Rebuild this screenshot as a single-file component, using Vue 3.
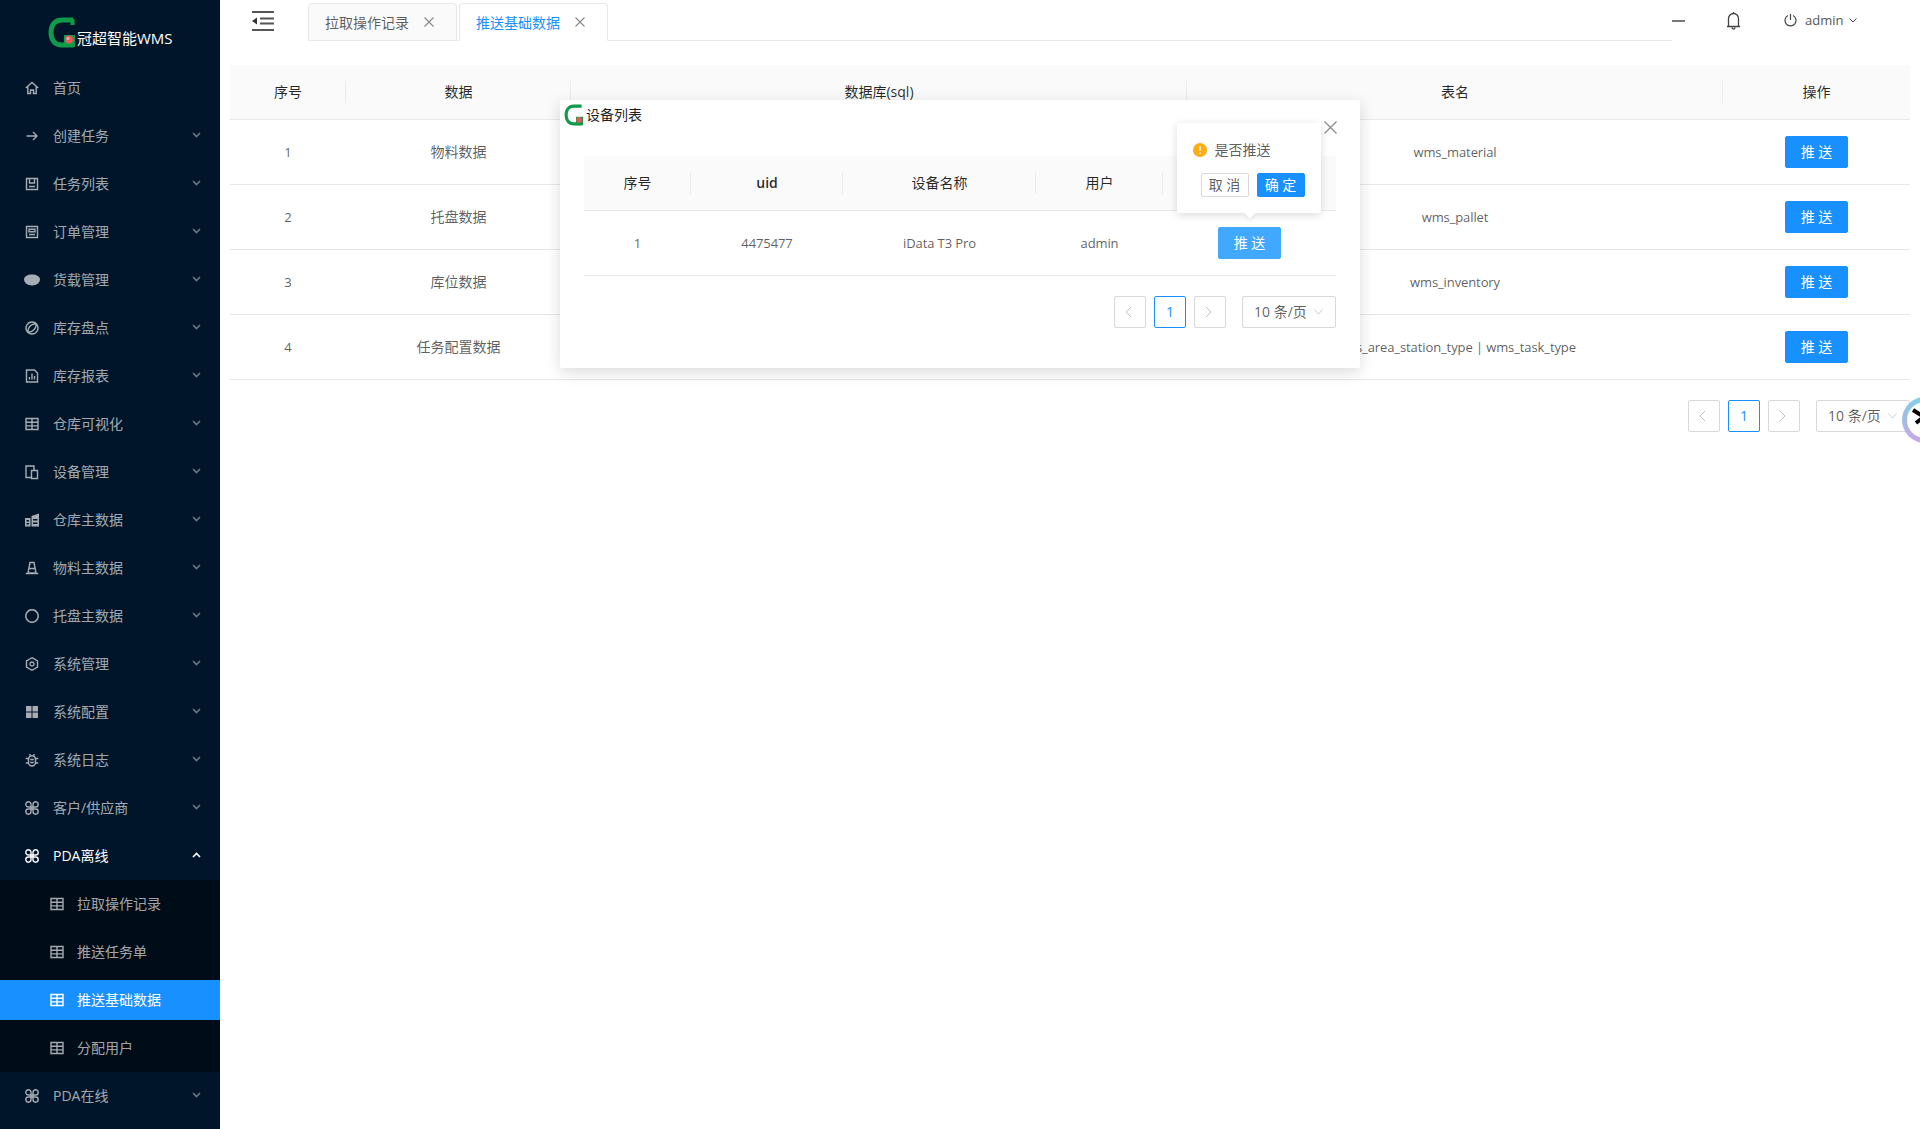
<template>
  <div class="app">
    <aside class="sider">
      <div class="logo">
        <svg class="logo-mark" viewBox="0 0 27 31">
          <path d="M25 3H14C7 3 3 8 3 15.500S7 28 14 28H25" fill="none" stroke="#0f9b4a" stroke-width="5" />
          <path d="M24.500 2V8" stroke="#0f9b4a" stroke-width="4" />
          <rect x="16" y="18" width="11" height="12" fill="#0f9b4a" />
          <circle cx="21" cy="22.500" r="4" fill="#e8575c" />
          <circle cx="20" cy="21.500" r="1.500" fill="#f6b4b4" />
        </svg>
        <span class="logo-text">冠超智能WMS</span>
      </div>
      <ul class="menu">
        <template v-for="item in menu" :key="item.label">
          <li class="menu-item" :class="{ open: item.children }">
            <svg class="menu-icon" :class="{ solid: solidIcons.includes(item.icon) }" viewBox="0 0 14 14">
              <path :d="icons[item.icon]" />
            </svg>
            <span class="label">{{ item.label }}</span>
            <svg v-if="item.arrow !== false" class="chevron" viewBox="0 0 9 6">
              <path :d="item.children ? 'M1 5 4.500 1.500 8 5' : 'M1 1 4.500 4.500 8 1'" />
            </svg>
          </li>
          <ul v-if="item.children" class="sub-menu">
            <li
              v-for="child in item.children"
              :key="child"
              class="sub-item"
              :class="{ active: child === '推送基础数据' }"
            >
              <svg class="menu-icon" viewBox="0 0 14 14"><path :d="icons.table" /></svg>
              <span class="label">{{ child }}</span>
            </li>
          </ul>
        </template>
      </ul>
    </aside>

    <main class="main">
      <header class="top-bar">
        <svg class="collapse" viewBox="0 0 22 20">
          <path d="M0 1h22M8 7.500h14M8 12.500h14M0 19h22" fill="none" stroke="#555" stroke-width="2" />
          <path d="M0 10 5 6.500v7z" fill="#333" />
        </svg>
        <div class="tabs">
          <div class="tab">
            <span>拉取操作记录</span>
            <svg class="tab-close" viewBox="0 0 10 10"><path d="M.5.5l9 9M9.500.5l-9 9" /></svg>
          </div>
          <div class="tab active">
            <span>推送基础数据</span>
            <svg class="tab-close" viewBox="0 0 10 10"><path d="M.5.5l9 9M9.500.5l-9 9" /></svg>
          </div>
        </div>
        <div class="tools">
          <span class="tool-minus"></span>
          <svg class="tool-bell" viewBox="0 0 15 19">
            <path d="M1 15.500h13M2.500 15.500V7.500a5 5 0 0 1 10 0v8M7.500 2.500V1M6 16.500a1.500 1.500 0 0 0 3 0" />
          </svg>
          <svg class="tool-power" viewBox="0 0 13 14">
            <path d="M4 2.500a5.500 5.500 0 1 0 5 0M6.500 1v6" />
          </svg>
          <span class="tool-user">admin</span>
          <svg class="tool-chevron" viewBox="0 0 8 5"><path d="M.5.500 4 4 7.500.5" /></svg>
        </div>
      </header>

      <section class="content">
        <table class="data-table">
          <colgroup>
            <col v-for="w in mainWidths" :key="w" :style="{ width: w + 'px' }" />
          </colgroup>
          <thead>
            <tr>
              <th v-for="h in mainHead" :key="h">{{ h }}</th>
            </tr>
          </thead>
          <tbody>
            <tr v-for="(row, i) in rows" :key="row.name">
              <td class="latin">{{ i + 1 }}</td>
              <td>{{ row.name }}</td>
              <td></td>
              <td class="latin">{{ row.table }}</td>
              <td class="actions"><button class="btn primary">推 送</button></td>
            </tr>
          </tbody>
        </table>
        <div class="pager">
          <span class="page-btn muted"><svg viewBox="0 0 7 12"><path d="M6 1 1 6l5 5" /></svg></span>
          <span class="page-btn current">1</span>
          <span class="page-btn muted"><svg viewBox="0 0 7 12"><path d="M1 1l5 5-5 5" /></svg></span>
          <span class="page-size"><span class="label">10 条/页</span><svg viewBox="0 0 11 7"><path d="M.5.500 5.500 6l5-5.500" /></svg></span>
        </div>
      </section>
    </main>

    <div class="modal">
      <div class="modal-head">
        <svg class="modal-logo" viewBox="0 0 27 31">
          <path d="M25 3H14C7 3 3 8 3 15.500S7 28 14 28H25" fill="none" stroke="#0f9b4a" stroke-width="4.500" />
          <rect x="17" y="18" width="10" height="12" fill="#0f9b4a" />
          <circle cx="21.500" cy="22.500" r="4" fill="#e8575c" />
        </svg>
        <span>设备列表</span>
      </div>
      <svg class="modal-close" viewBox="0 0 13 13"><path d="M.5.5l12 12M12.500.5l-12 12" /></svg>
      <div class="modal-body">
        <table class="data-table">
          <colgroup>
            <col v-for="w in deviceWidths" :key="w" :style="{ width: w + 'px' }" />
          </colgroup>
          <thead>
            <tr>
              <th>序号</th>
              <th class="strong">uid</th>
              <th>设备名称</th>
              <th>用户</th>
              <th></th>
            </tr>
          </thead>
          <tbody>
            <tr>
              <td class="latin">1</td>
              <td class="latin">4475477</td>
              <td class="latin">iData T3 Pro</td>
              <td class="latin">admin</td>
              <td class="actions">
                <span class="pop-anchor">
                  <button class="btn hover">推 送</button>
                  <div class="popover">
                    <div class="pop-message">
                      <svg class="pop-warn" viewBox="0 0 14 14">
                        <circle cx="7" cy="7" r="7" fill="#faad14" />
                        <path d="M7 3.200v4.600M7 9.500v1.400" stroke="#fff" stroke-width="1.400" />
                      </svg>
                      <span class="label">是否推送</span>
                    </div>
                    <div class="pop-actions">
                      <button class="btn small">取 消</button>
                      <button class="btn small primary">确 定</button>
                    </div>
                  </div>
                </span>
              </td>
            </tr>
          </tbody>
        </table>
        <div class="pager">
          <span class="page-btn muted"><svg viewBox="0 0 7 12"><path d="M6 1 1 6l5 5" /></svg></span>
          <span class="page-btn current">1</span>
          <span class="page-btn muted"><svg viewBox="0 0 7 12"><path d="M1 1l5 5-5 5" /></svg></span>
          <span class="page-size"><span class="label">10 条/页</span><svg viewBox="0 0 11 7"><path d="M.5.500 5.500 6l5-5.500" /></svg></span>
        </div>
      </div>
    </div>

    <div class="float-ball">
      <svg viewBox="0 0 36 36"><path d="M6 8 14 13M14 17 9 21" fill="none" stroke="#000" stroke-width="4" /></svg>
    </div>
  </div>
</template>

<script setup>
const icons = {
  home: 'M.8 7 7 1.500 13.200 7M2.800 5.600V12.500H5.500V9H8.500V12.500H11.200V5.600',
  arrow: 'M1.500 7H12M8 3l4 4-4 4',
  list: 'M1.500 1.500h11v11h-11zM4.500 1.500V6h5V1.500M4 9.500h6',
  order: 'M1.500 1.500h11v11h-11zM4 4.300h6v2.500H4zM4 9.500h6',
  disc: 'M-1 6.500C-1 3.500 2.500 1.500 7 1.500S15 3.500 15 6.500 11.500 12.500 7 12.500-1 9.500-1 6.500z',
  check: 'M7 1a6 6 0 1 0 .01 0zM2.800 11.200C3 6 6 3 11.200 2.800 11 8 8 11 2.800 11.200z',
  report: 'M1.500 1h8l3 3v9h-11zM4.500 10.500V8M7 10.500V4.500M9.500 10.500V7',
  table: 'M1 1.500h12v11H1zM1 5.200h12M1 8.900h12M7 1.500v11',
  device: 'M9 5V1H1v11.500h5M6.500 5.500h6v8h-6z',
  bank: 'M0 5H5.500V13.500H0zM6.500 3 14 .5V13.500H6.500zM1.500 7h2.500v1.500H1.500zM1.500 10h2.500v1.500H1.500zM8 6h4.500v1.500H8zM8 9.500h4.500V11H8z',
  cone: 'M5 1.500h4l2 10.500H3zM4.200 7.500h5.600M.8 12.500h12.400',
  circle: 'M7 .8a6.200 6.200 0 1 0 .01 0z',
  setting: 'M7 .7 12.500 3.900v6.200L7 13.300 1.500 10.100V3.900zM7 5a2 2 0 1 0 .01 0z',
  grid: 'M1 1h5.500v5.500H1zM7.500 1H13v5.500H7.500zM1 7.500h5.500V13H1zM7.500 7.500H13V13H7.500z',
  bug: 'M7 2.800a3.500 3.500 0 0 1 3.500 3.500v3.200a3.500 3.500 0 0 1-7 0V6.300A3.500 3.500 0 0 1 7 2.800zM5.200 6.500h3.600M5.200 9.500h3.600M4.500 1 5.500 3M9.500 1 8.500 3M.8 5.500h2.700M10.500 5.500h2.700M.8 10h2.700M10.500 10h2.700',
  command: 'M6 6H3.400A2.600 2.600 0 1 1 6 3.400V10.600A2.600 2.600 0 1 1 3.400 8H10.600A2.600 2.600 0 1 1 8 10.600V3.400A2.600 2.600 0 1 1 10.600 6H6'
}
const solidIcons = ['disc', 'grid', 'bank']

const menu = [
  { label: '首页', icon: 'home', arrow: false },
  { label: '创建任务', icon: 'arrow' },
  { label: '任务列表', icon: 'list' },
  { label: '订单管理', icon: 'order' },
  { label: '货载管理', icon: 'disc' },
  { label: '库存盘点', icon: 'check' },
  { label: '库存报表', icon: 'report' },
  { label: '仓库可视化', icon: 'table' },
  { label: '设备管理', icon: 'device' },
  { label: '仓库主数据', icon: 'bank' },
  { label: '物料主数据', icon: 'cone' },
  { label: '托盘主数据', icon: 'circle' },
  { label: '系统管理', icon: 'setting' },
  { label: '系统配置', icon: 'grid' },
  { label: '系统日志', icon: 'bug' },
  { label: '客户/供应商', icon: 'command' },
  { label: 'PDA离线', icon: 'command', children: ['拉取操作记录', '推送任务单', '推送基础数据', '分配用户'] },
  { label: 'PDA在线', icon: 'command' }
]

const mainHead = ['序号', '数据', '数据库(sql)', '表名', '操作']
const mainWidths = [116, 225, 616, 536, 187]
const deviceWidths = [107, 152, 193, 127, 173]

const rows = [
  { name: '物料数据', table: 'wms_material' },
  { name: '托盘数据', table: 'wms_pallet' },
  { name: '库位数据', table: 'wms_inventory' },
  { name: '任务配置数据', table: 'wms_area_station_type | wms_task_type' }
]
</script>

<style>
html,
body {
  margin: 0;
  height: 100%;
  overflow: hidden;
}
</style>

<style scoped>
.app {
  position: relative;
  display: flex;
  height: 100vh;
  overflow: hidden;
  background: #fff;
  font-family: "Open Sans", "Noto Sans CJK SC", sans-serif;
  font-size: 14px;
  color: rgba(0, 0, 0, 0.65);
}

.label {
  padding-bottom: 2px;
}

/* 侧边栏 */
.sider {
  flex: 0 0 220px;
  background: #001529;
  overflow: hidden;
}

.logo {
  position: relative;
  height: 64px;
  display: flex;
  align-items: flex-start;
  padding: 17px 0 0 48px;
  box-sizing: border-box;
}

.logo-mark {
  width: 27px;
  height: 31px;
}

.logo-text {
  margin: 9px 0 0 2px;
  font-size: 15px;
  line-height: 24px;
  color: #fff;
}

.menu,
.sub-menu {
  display: flex;
  flex-direction: column;
  list-style: none;
  margin: 0;
  padding: 0;
}

.menu-item,
.sub-item {
  flex: none;
  display: flex;
  align-items: center;
  height: 40px;
  margin: 4px 0;
  padding-left: 25px;
  color: rgba(255, 255, 255, 0.65);
}

.menu-item.open {
  color: #fff;
}

.sub-menu {
  background: #000c17;
}

.sub-item {
  padding-left: 50px;
}

.sub-item.active {
  background: #1890ff;
  color: #fff;
}

.menu-icon {
  flex: none;
  width: 14px;
  height: 14px;
  margin-right: 14px;
  overflow: visible;
  fill: none;
  stroke: currentColor;
  stroke-width: 1.4;
}

.sub-item .menu-icon {
  margin-right: 13px;
}

.menu-icon.solid {
  fill: currentColor;
  fill-rule: evenodd;
  stroke: none;
}

.chevron {
  width: 9px;
  height: 6px;
  margin: 0 19px 2px auto;
  fill: none;
  stroke: currentColor;
  stroke-width: 1.6;
  opacity: 0.65;
}

.open .chevron {
  opacity: 1;
}

/* 主体 */
.main {
  flex: 1;
  min-width: 0;
}

.top-bar {
  display: flex;
  height: 41px;
}

.collapse {
  flex: none;
  width: 22px;
  height: 20px;
  margin: 11px 34px 0 32px;
}

.tabs {
  flex: none;
  display: flex;
  gap: 2px;
  width: 1364px;
  box-sizing: border-box;
  padding-top: 3px;
  border-bottom: 1px solid #e8e8e8;
}

.tab {
  display: flex;
  align-items: center;
  width: 149px;
  height: 38px;
  box-sizing: border-box;
  padding-left: 16px;
  border: 1px solid #e8e8e8;
  border-radius: 4px 4px 0 0;
  background: #fafafa;
}

.tab.active {
  background: #fff;
  border-bottom-color: #fff;
  color: #1890ff;
}

.tab-close {
  width: 10px;
  height: 10px;
  margin-left: 15px;
  fill: none;
  stroke: #888;
  stroke-width: 1.1;
}

.tools {
  display: flex;
  align-items: center;
  height: 40px;
  color: #555;
}

.tool-minus {
  width: 13px;
  height: 2px;
  margin-top: 2px;
  background: #777;
}

.tool-bell {
  width: 15px;
  height: 19px;
  margin-left: 41px;
  fill: none;
  stroke: #444;
  stroke-width: 1.3;
}

.tool-power {
  width: 13px;
  height: 14px;
  margin-left: 43px;
  fill: none;
  stroke: #444;
  stroke-width: 1.2;
}

.tool-user {
  margin-left: 8px;
  font-size: 13px;
}

.tool-chevron {
  width: 8px;
  height: 5px;
  margin-left: 6px;
  fill: none;
  stroke: #444;
}

.content {
  margin: 24px 10px 0;
}

/* 表格 */
.data-table {
  width: 100%;
  table-layout: fixed;
  border-collapse: separate;
  border-spacing: 0;
}

.data-table th {
  position: relative;
  height: 55px;
  box-sizing: border-box;
  padding: 0 0 2px;
  background: #fafafa;
  border-bottom: 1px solid #e8e8e8;
  font-weight: 400;
  color: rgba(0, 0, 0, 0.85);
}

.data-table th.strong {
  font-weight: 600;
}

.data-table th:not(:last-child)::after {
  content: "";
  position: absolute;
  top: 16px;
  right: 0;
  width: 1px;
  height: 22px;
  background: rgba(0, 0, 0, 0.06);
}

.data-table td {
  height: 65px;
  box-sizing: border-box;
  padding: 0 0 2px;
  text-align: center;
  white-space: nowrap;
  border-bottom: 1px solid #e8e8e8;
}

.data-table td.latin {
  padding-bottom: 0;
  font-size: 13px;
  letter-spacing: -0.1px;
}

.data-table td.actions {
  padding-bottom: 0;
}

.btn {
  width: 63px;
  height: 32px;
  padding: 0 0 2px;
  box-sizing: border-box;
  border: 1px solid #d9d9d9;
  border-radius: 2px;
  background: #fff;
  font: inherit;
  color: rgba(0, 0, 0, 0.65);
}

.btn.primary {
  background: #1890ff;
  border-color: #1890ff;
  color: #fff;
}

.btn.hover {
  background: #40a9ff;
  border-color: #40a9ff;
  color: #fff;
}

.btn.small {
  width: 48px;
  height: 24px;
}

/* 分页 */
.pager {
  display: flex;
  justify-content: flex-end;
  gap: 8px;
  margin-top: 20px;
}

.page-btn {
  display: flex;
  align-items: center;
  justify-content: center;
  width: 32px;
  height: 32px;
  box-sizing: border-box;
  border: 1px solid #d9d9d9;
  border-radius: 2px;
}

.page-btn.muted {
  padding-right: 3px;
}

.page-btn svg {
  width: 7px;
  height: 12px;
  fill: none;
  stroke: rgba(0, 0, 0, 0.25);
}

.page-btn.current {
  padding-bottom: 1px;
  border-color: #1890ff;
  color: #1890ff;
}

.page-size {
  display: flex;
  align-items: center;
  justify-content: space-between;
  width: 94px;
  height: 32px;
  margin-left: 8px;
  padding: 0 12px 0 11px;
  box-sizing: border-box;
  border: 1px solid #d9d9d9;
  border-radius: 2px;
}

.page-size svg {
  width: 9px;
  height: 6px;
  fill: none;
  stroke: rgba(0, 0, 0, 0.25);
}

/* 弹窗 */
.modal {
  position: absolute;
  top: 100px;
  left: 560px;
  width: 800px;
  height: 268px;
  background: #fff;
  border-radius: 2px;
  box-shadow: 0 4px 16px rgba(0, 0, 0, 0.15);
}

.modal-head {
  display: flex;
  align-items: flex-start;
  height: 56px;
  padding: 4px 0 0 4px;
  box-sizing: border-box;
  color: rgba(0, 0, 0, 0.9);
}

.modal-logo {
  width: 19px;
  height: 22px;
  margin-right: 3px;
}

.modal-head span {
  line-height: 22px;
}

.modal-close {
  position: absolute;
  top: 21px;
  right: 23px;
  width: 13px;
  height: 13px;
  fill: none;
  stroke: #888;
  stroke-width: 1.2;
}

.modal-body {
  padding: 0 24px;
}

.pop-anchor {
  position: relative;
  display: inline-block;
  vertical-align: middle;
}

.popover {
  position: absolute;
  bottom: calc(100% + 14px);
  left: 50%;
  width: 144px;
  height: 90px;
  margin-left: -73px;
  background: #fff;
  border-radius: 2px;
  box-shadow: 0 2px 8px rgba(0, 0, 0, 0.15);
  text-align: left;
}

.popover::after {
  content: "";
  position: absolute;
  left: 69px;
  bottom: -4px;
  width: 8px;
  height: 8px;
  background: #fff;
  transform: rotate(45deg);
  box-shadow: 2px 2px 3px rgba(0, 0, 0, 0.05);
}

.pop-message {
  display: flex;
  align-items: center;
  gap: 8px;
  height: 20px;
  padding: 17px 0 0 16px;
}

.pop-warn {
  width: 14px;
  height: 14px;
}

.pop-actions {
  display: flex;
  gap: 8px;
  margin-top: 13px;
  padding-left: 24px;
}

.float-ball {
  position: absolute;
  top: 397px;
  left: 1902px;
  width: 46px;
  height: 46px;
  padding: 5px;
  box-sizing: border-box;
  border-radius: 50%;
  background: #fff;
  background-image: conic-gradient(from 200deg, #c9a7e8, #7fd0e8 40%, #7fd0e8 70%, #c9a7e8);
}

.float-ball svg {
  display: block;
  width: 36px;
  height: 36px;
  border-radius: 50%;
  background: #fff;
}
</style>
